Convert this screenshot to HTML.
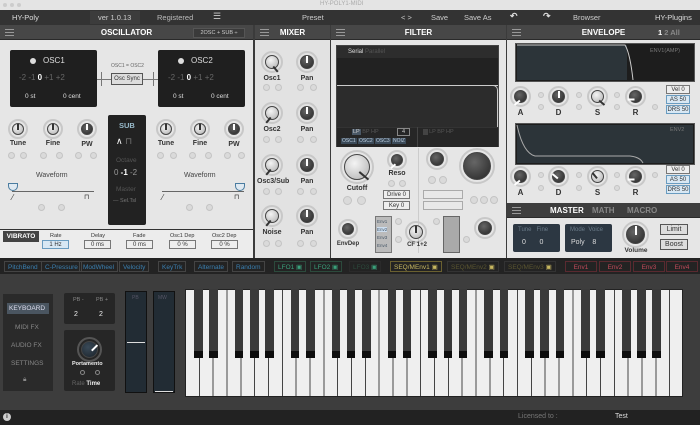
<!DOCTYPE html>
<html><head><meta charset="utf-8"><style>
*{box-sizing:border-box;margin:0;padding:0}
body{width:700px;height:425px;overflow:hidden;background:#3b3b3b;font-family:"Liberation Sans",sans-serif;position:relative}
div{position:absolute}
.t{font-size:7px;white-space:nowrap}
.hd{background:#474747;height:15px;top:25px;color:#fff;font-weight:bold;font-size:8px;text-align:center;line-height:15px;border-bottom:1px solid #2a2a2a}
.hm{position:absolute;left:5px;top:4px;width:9px;height:7px;border-top:1px solid #999;border-bottom:1px solid #999}
.hm:after{content:"";position:absolute;left:0;top:2px;width:9px;border-top:1px solid #999}
.pn{background:#e6e6e6;top:40px;height:218px}
.k{border-radius:50%;border:2px solid #c8c8c8;}
.k i{position:absolute;border-radius:50%;left:2px;top:2px;right:2px;bottom:2px;background:radial-gradient(circle at 40% 35%,#f4f4f4,#b0b0b0);border:1px solid #444}
.k.d i{background:radial-gradient(circle at 40% 35%,#666,#262626)}
.k b{position:absolute;left:50%;top:3px;width:2px;margin-left:-1px;height:40%;background:#333;transform-origin:50% 125%}
.k.d b{background:#fff}
.c{width:7px;height:7px;border-radius:50%;border:1px solid #c4c4c4;background:#dadada}
.lb{font-size:7px;color:#333;text-align:center;font-weight:bold}
.dk{background:#1f1f1f;border-radius:2px}
.bx{border:1px solid #777;background:#eee;font-size:6px;text-align:center;color:#333}
.m{font-size:6.5px;top:261px;height:11px;line-height:11px;padding:0 3px;border:1px solid #444}
</style></head><body>
<div style="left:0;top:0;width:700px;height:10px;background:#e4e4e4"></div>
<div class="t" style="left:320px;top:1px;font-size:6px;color:#aaa">HY-POLY1-MIDI</div>
<div style="left:3px;top:3px;width:4px;height:4px;border-radius:50%;background:#ccc"></div>
<div style="left:10px;top:3px;width:4px;height:4px;border-radius:50%;background:#ccc"></div>
<div style="left:17px;top:3px;width:4px;height:4px;border-radius:50%;background:#ccc"></div>
<div style="left:0;top:10px;width:700px;height:15px;background:#333"></div>
<div class="t" style="left:12px;top:13px;color:#ddd;font-size:7.5px">HY-Poly</div>
<div style="left:90px;top:11px;width:50px;height:13px;background:#3c3c3c"></div>
<div class="t" style="left:98px;top:13px;color:#ccc;font-size:7.5px">ver 1.0.13</div>
<div class="t" style="left:157px;top:13px;color:#bbb;font-size:7.5px">Registered</div>
<div class="t" style="left:213px;top:11px;color:#ccc;font-size:9px">☰</div>
<div class="t" style="left:302px;top:13px;color:#ccc;font-size:7.5px">Preset</div>
<div class="t" style="left:401px;top:13px;color:#ccc;font-size:7.5px">&lt; &gt;</div>
<div class="t" style="left:431px;top:13px;color:#ccc;font-size:7.5px">Save</div>
<div class="t" style="left:464px;top:13px;color:#ccc;font-size:7.5px">Save As</div>
<div class="t" style="left:510px;top:11px;color:#ddd;font-size:9px;font-weight:bold">↶</div>
<div class="t" style="left:543px;top:11px;color:#ddd;font-size:9px;font-weight:bold">↷</div>
<div class="t" style="left:573px;top:13px;color:#ccc;font-size:7.5px">Browser</div>
<div class="t" style="left:655px;top:13px;color:#ddd;font-size:7.5px">HY-Plugins</div>

<div class="hd" style="left:0;width:253px"><span class="hm"></span>OSCILLATOR</div>
<div style="left:193px;top:28px;width:52px;height:10px;background:#3a3a3a;border:1px solid #555;color:#ccc;font-size:5.5px;line-height:8px;text-align:center">2OSC + SUB ÷</div>
<div class="hd" style="left:255px;width:75px"><span class="hm"></span>MIXER</div>
<div class="hd" style="left:331px;width:175px"><span class="hm"></span>FILTER</div>
<div class="hd" style="left:507px;width:193px"><span class="hm"></span>ENVELOPE</div>
<div class="t" style="left:658px;top:28px;color:#fff;font-weight:bold;font-size:7.5px">1 <span style="color:#888">2 All</span></div>

<div class="pn" style="left:0;width:253px"></div>
<div class="pn" style="left:255px;width:75px;background:#e2e2e2"></div>
<div class="pn" style="left:331px;width:175px"></div>
<div class="pn" style="left:507px;width:193px;height:163px"></div>

<div class="dk" style="left:10px;top:50px;width:87px;height:57px"></div>
<div style="left:30px;top:58px;width:6px;height:6px;border-radius:50%;background:#ddd"></div>
<div class="t" style="left:43px;top:56px;color:#ddd;font-size:8px">OSC1</div>
<div class="t" style="left:19px;top:73px;color:#666;font-size:8px">-2 -1 <b style="color:#fff">0</b> +1 +2</div>
<div class="t" style="left:25px;top:93px;color:#ddd;font-size:6.5px">0 st</div>
<div class="t" style="left:63px;top:93px;color:#ddd;font-size:6.5px">0 cent</div>
<div class="dk" style="left:158px;top:50px;width:87px;height:57px"></div>
<div style="left:178px;top:58px;width:6px;height:6px;border-radius:50%;background:#ddd"></div>
<div class="t" style="left:191px;top:56px;color:#ddd;font-size:8px">OSC2</div>
<div class="t" style="left:168px;top:73px;color:#666;font-size:8px">-2 -1 <b style="color:#fff">0</b> +1 +2</div>
<div class="t" style="left:173px;top:93px;color:#ddd;font-size:6.5px">0 st</div>
<div class="t" style="left:211px;top:93px;color:#ddd;font-size:6.5px">0 cent</div>
<div class="t" style="left:111px;top:63px;color:#666;font-size:5px">OSC1 = OSC2</div>
<div style="left:97px;top:79px;width:61px;border-top:1px solid #777"></div>
<div style="left:101px;top:72px;height:14px;border-left:1px solid #777"></div>
<div style="left:153px;top:72px;height:14px;border-left:1px solid #777"></div>
<div class="bx" style="left:111px;top:73px;width:32px;height:12px;line-height:10px;background:#ddd;border:1px solid #555">Osc Sync</div>

<div class="k" style="left:8px;top:119px;width:20px;height:20px"><i></i><b></b></div>
<div class="k" style="left:43px;top:119px;width:20px;height:20px"><i></i><b></b></div>
<div class="k d" style="left:77px;top:119px;width:20px;height:20px"><i></i><b></b></div>
<div class="k" style="left:156px;top:119px;width:20px;height:20px"><i></i><b></b></div>
<div class="k" style="left:190px;top:119px;width:20px;height:20px"><i></i><b></b></div>
<div class="k d" style="left:224px;top:119px;width:20px;height:20px"><i></i><b></b></div>
<div class="lb" style="left:8px;top:140px;width:20px">Tune</div>
<div class="lb" style="left:43px;top:140px;width:20px">Fine</div>
<div class="lb" style="left:77px;top:141px;width:20px">PW</div>
<div class="lb" style="left:156px;top:140px;width:20px">Tune</div>
<div class="lb" style="left:190px;top:140px;width:20px">Fine</div>
<div class="lb" style="left:224px;top:141px;width:20px">PW</div>
<div class="c" style="left:8px;top:152px"></div><div class="c" style="left:20px;top:152px"></div>
<div class="c" style="left:40px;top:152px"></div><div class="c" style="left:56px;top:152px"></div>
<div class="c" style="left:75px;top:152px"></div><div class="c" style="left:90px;top:152px"></div>
<div class="c" style="left:157px;top:152px"></div><div class="c" style="left:170px;top:152px"></div>
<div class="c" style="left:189px;top:152px"></div><div class="c" style="left:205px;top:152px"></div>
<div class="c" style="left:224px;top:152px"></div><div class="c" style="left:238px;top:152px"></div>
<div class="t" style="left:36px;top:172px;color:#444">Waveform</div>
<div class="t" style="left:184px;top:172px;color:#444">Waveform</div>
<div style="left:12px;top:191px;width:82px;border-top:1px solid #666"></div>
<div style="left:162px;top:191px;width:82px;border-top:1px solid #666"></div>
<div style="left:8px;top:183px;width:10px;height:8px;border:1px solid #4a7ca0;border-radius:0 0 5px 5px;background:#dfe9f1"></div>
<div style="left:235px;top:183px;width:10px;height:8px;border:1px solid #4a7ca0;border-radius:0 0 5px 5px;background:#dfe9f1"></div>
<div class="t" style="left:12px;top:193px;color:#333;font-size:8px">⁄</div>
<div class="t" style="left:84px;top:193px;color:#333;font-size:7px">⊓</div>
<div class="t" style="left:162px;top:193px;color:#333;font-size:8px">⁄</div>
<div class="t" style="left:234px;top:193px;color:#333;font-size:7px">⊓</div>
<div class="c" style="left:38px;top:204px"></div><div class="c" style="left:58px;top:204px"></div>
<div class="c" style="left:186px;top:204px"></div><div class="c" style="left:206px;top:204px"></div>

<div class="dk" style="left:108px;top:115px;width:38px;height:110px;background:#222"></div>
<div class="t" style="left:119px;top:121px;color:#9bc;font-weight:bold;font-size:7.5px">SUB</div>
<div class="t" style="left:116px;top:136px;color:#fff;font-size:9px">∧ <span style="color:#777">⊓</span></div>
<div class="t" style="left:116px;top:157px;color:#555;font-size:6.5px">Octave</div>
<div class="t" style="left:114px;top:168px;color:#999;font-size:8px">0 <b style="color:#fff">-1</b> -2</div>
<div class="t" style="left:116px;top:186px;color:#555;font-size:6.5px">Master</div>
<div class="t" style="left:113px;top:198px;color:#777;font-size:5.5px">— Sel.Tsl</div>

<div style="left:0;top:229px;width:253px;height:29px;background:#ececec;border-top:1px solid #333"></div>
<div style="left:3px;top:231px;width:36px;height:11px;background:#444;color:#fff;font-size:6.5px;font-weight:bold;line-height:11px;text-align:center">VIBRATO</div>
<div class="t" style="left:50px;top:233px;color:#333;font-size:5.5px">Rate</div>
<div class="bx" style="left:42px;top:240px;width:27px;height:9px;background:#d8e8f4;border-color:#6a9cc0;line-height:8px">1 Hz</div>
<div class="t" style="left:91px;top:233px;color:#333;font-size:5.5px">Delay</div>
<div class="bx" style="left:84px;top:240px;width:27px;height:9px;line-height:8px">0 ms</div>
<div class="t" style="left:133px;top:233px;color:#333;font-size:5.5px">Fade</div>
<div class="bx" style="left:126px;top:240px;width:27px;height:9px;line-height:8px">0 ms</div>
<div class="t" style="left:170px;top:233px;color:#333;font-size:5.5px">Osc1 Dep</div>
<div class="bx" style="left:169px;top:240px;width:27px;height:9px;line-height:8px">0 %</div>
<div class="t" style="left:212px;top:233px;color:#333;font-size:5.5px">Osc2 Dep</div>
<div class="bx" style="left:211px;top:240px;width:27px;height:9px;line-height:8px">0 %</div>

<div class="k" style="left:261px;top:51px;width:22px;height:22px"><i></i><b style="transform:rotate(140deg)"></b></div>
<div class="k d" style="left:296px;top:51px;width:22px;height:22px"><i></i><b></b></div>
<div class="lb" style="left:261px;top:75px;width:22px">Osc1</div><div class="lb" style="left:296px;top:75px;width:22px">Pan</div>
<div class="k" style="left:261px;top:102px;width:22px;height:22px"><i></i><b style="transform:rotate(-140deg)"></b></div>
<div class="k d" style="left:296px;top:102px;width:22px;height:22px"><i></i><b></b></div>
<div class="lb" style="left:261px;top:126px;width:22px">Osc2</div><div class="lb" style="left:296px;top:126px;width:22px">Pan</div>
<div class="k" style="left:261px;top:154px;width:22px;height:22px"><i></i><b style="transform:rotate(-140deg)"></b></div>
<div class="k d" style="left:296px;top:154px;width:22px;height:22px"><i></i><b></b></div>
<div class="lb" style="left:257px;top:178px;width:30px">Osc3/Sub</div><div class="lb" style="left:296px;top:178px;width:22px">Pan</div>
<div class="k" style="left:261px;top:205px;width:22px;height:22px"><i></i><b style="transform:rotate(-140deg)"></b></div>
<div class="k d" style="left:296px;top:205px;width:22px;height:22px"><i></i><b></b></div>
<div class="lb" style="left:261px;top:229px;width:22px">Noise</div><div class="lb" style="left:296px;top:229px;width:22px">Pan</div>
<div class="c" style="left:263px;top:84px"></div><div class="c" style="left:275px;top:84px"></div><div class="c" style="left:297px;top:84px"></div><div class="c" style="left:310px;top:84px"></div>
<div class="c" style="left:263px;top:136px"></div><div class="c" style="left:275px;top:136px"></div><div class="c" style="left:297px;top:136px"></div><div class="c" style="left:310px;top:136px"></div>
<div class="c" style="left:263px;top:188px"></div><div class="c" style="left:275px;top:188px"></div><div class="c" style="left:297px;top:188px"></div><div class="c" style="left:310px;top:188px"></div>
<div class="c" style="left:263px;top:240px"></div><div class="c" style="left:275px;top:240px"></div><div class="c" style="left:297px;top:240px"></div><div class="c" style="left:310px;top:240px"></div>

<div style="left:336px;top:45px;width:163px;height:102px;background:#222;border:1px solid #444"></div>
<div style="left:337px;top:46px;width:161px;height:12px;background:#2d2d2d"></div>
<div class="t" style="left:348px;top:49px;color:#ddd;font-size:6px">Serial <span style="color:#555">Parallel</span></div>
<div style="left:337px;top:85px;width:161px;height:42px;background:#2c2c2c;border-top:1px solid #ccc"></div>
<div style="left:488px;top:85px;width:10px;height:42px;border-top:1px solid #ccc;border-right:1px solid #ccc;border-radius:0 5px 0 0"></div>
<div style="left:337px;top:127px;width:161px;height:20px;background:#262626;border-top:1px solid #333"></div>
<div style="left:417px;top:127px;height:20px;border-left:1px solid #444"></div>
<div class="t" style="left:352px;top:129px;color:#ccc;font-size:5.5px"><span style="background:#4a5866;padding:0 1px">LP</span> <span style="color:#555">BP HP</span></div>
<div style="left:397px;top:128px;width:13px;height:8px;border:1px solid #888;color:#ccc;font-size:5.5px;text-align:center;line-height:6px">4</div>
<div class="t" style="left:423px;top:129px;color:#555;font-size:5.5px"><span style="background:#444">&nbsp;&nbsp;&nbsp;</span> LP BP HP</div>
<div class="t" style="left:341px;top:138px;color:#bcd;font-size:5px"><span style="background:#3b4a58;padding:0 1px">OSC1</span> <span style="background:#3b4a58;padding:0 1px">OSC2</span> <span style="background:#3b4a58;padding:0 1px">OSC3</span> <span style="background:#3b4a58;padding:0 1px">NOIZ</span></div>
<div style="left:418px;top:148px;height:105px;border-left:1px solid #ccc"></div>

<div class="k" style="left:340px;top:150px;width:34px;height:34px"><i></i><b style="transform:rotate(130deg)"></b></div>
<div class="lb" style="left:342px;top:185px;width:30px">Cutoff</div>
<div class="k d" style="left:387px;top:150px;width:20px;height:20px"><i></i><b style="transform:rotate(-130deg)"></b></div>
<div class="lb" style="left:387px;top:170px;width:20px">Reso</div>
<div class="c" style="left:388px;top:180px"></div><div class="c" style="left:399px;top:180px"></div>
<div class="c" style="left:343px;top:196px;width:9px;height:9px"></div><div class="c" style="left:357px;top:196px;width:9px;height:9px"></div>
<div class="bx" style="left:383px;top:190px;width:27px;height:9px;line-height:8px">Drive 0</div>
<div class="bx" style="left:383px;top:201px;width:27px;height:9px;line-height:8px">Key 0</div>
<div class="k d" style="left:426px;top:148px;width:22px;height:22px"><i></i></div>
<div class="c" style="left:428px;top:176px;width:8px;height:8px"></div><div class="c" style="left:439px;top:176px;width:8px;height:8px"></div>
<div class="k d" style="left:459px;top:148px;width:36px;height:36px"><i></i></div>
<div class="bx" style="left:423px;top:190px;width:40px;height:9px;background:#e8e8e8;border-color:#aaa"></div>
<div class="bx" style="left:423px;top:201px;width:40px;height:9px;background:#e8e8e8;border-color:#aaa"></div>
<div class="c" style="left:470px;top:196px;width:8px;height:8px"></div><div class="c" style="left:480px;top:196px;width:8px;height:8px"></div><div class="c" style="left:490px;top:196px;width:8px;height:8px"></div>
<div class="k d" style="left:338px;top:219px;width:20px;height:20px"><i></i></div>
<div class="lb" style="left:335px;top:241px;width:26px;font-size:6px">EnvDep</div>
<div style="left:375px;top:216px;width:17px;height:37px;background:#bbb;border:1px solid #777"></div>
<div class="t" style="left:377px;top:218px;color:#456;font-size:4.5px;line-height:8px">Env1<br><span style="background:#cde">Env2</span><br>Env3<br>Env4</div>
<div class="c" style="left:395px;top:218px"></div><div class="c" style="left:395px;top:236px"></div>
<div class="k" style="left:405px;top:221px;width:22px;height:22px"><i></i><b></b></div>
<div class="lb" style="left:402px;top:242px;width:30px;font-size:6px">CF 1+2</div>
<div class="c" style="left:433px;top:218px"></div>
<div style="left:443px;top:216px;width:17px;height:37px;background:#aaa;border:1px solid #666"></div>
<div class="c" style="left:463px;top:236px"></div>
<div class="k d" style="left:474px;top:217px;width:22px;height:22px"><i></i></div>

<div style="left:515px;top:43px;width:180px;height:39px;background:#1d1d1d;border:1px solid #555"></div>
<div style="left:517px;top:45px;width:110px;height:35px;background:#2c3439"></div>
<svg style="position:absolute;left:515px;top:43px" width="180" height="39"><path d="M2 2 L110 2 Q115 10 118 37" stroke="#ccc" fill="none" stroke-width="1"/></svg>
<div class="t" style="left:650px;top:48px;color:#777;font-size:5.5px">ENV1(AMP)</div>
<div style="left:515px;top:123px;width:180px;height:42px;background:#1d1d1d;border:1px solid #555"></div>
<div style="left:517px;top:125px;width:176px;height:38px;background:#2c3439"></div>
<svg style="position:absolute;left:515px;top:123px" width="180" height="42"><path d="M2 2 Q8 30 20 33 L115 33 Q125 34 128 40" stroke="#aaa" fill="none" stroke-width="1"/></svg>
<div class="t" style="left:670px;top:127px;color:#777;font-size:5.5px">ENV2</div>
<div class="k d" style="left:510px;top:86px;width:21px;height:21px"><i></i><b style="transform:rotate(-130deg)"></b></div>
<div class="k d" style="left:548px;top:86px;width:21px;height:21px"><i></i><b></b></div>
<div class="k" style="left:587px;top:86px;width:21px;height:21px"><i></i><b style="transform:rotate(130deg)"></b></div>
<div class="k d" style="left:625px;top:86px;width:21px;height:21px"><i></i><b style="transform:rotate(-90deg)"></b></div>
<div class="lb" style="left:510px;top:108px;width:21px;font-size:8px">A</div>
<div class="lb" style="left:548px;top:108px;width:21px;font-size:8px">D</div>
<div class="lb" style="left:587px;top:108px;width:21px;font-size:8px">S</div>
<div class="lb" style="left:625px;top:108px;width:21px;font-size:8px">R</div>
<div class="k d" style="left:510px;top:166px;width:21px;height:21px"><i></i><b style="transform:rotate(-130deg)"></b></div>
<div class="k d" style="left:548px;top:166px;width:21px;height:21px"><i></i><b style="transform:rotate(-50deg)"></b></div>
<div class="k" style="left:587px;top:166px;width:21px;height:21px"><i></i><b style="transform:rotate(-40deg)"></b></div>
<div class="k d" style="left:625px;top:166px;width:21px;height:21px"><i></i><b style="transform:rotate(-90deg)"></b></div>
<div class="lb" style="left:510px;top:188px;width:21px;font-size:8px">A</div>
<div class="lb" style="left:548px;top:188px;width:21px;font-size:8px">D</div>
<div class="lb" style="left:587px;top:188px;width:21px;font-size:8px">S</div>
<div class="lb" style="left:625px;top:188px;width:21px;font-size:8px">R</div>
<div class="c" style="left:538px;top:92px;width:6px;height:6px"></div><div class="c" style="left:538px;top:104px;width:6px;height:6px"></div>
<div class="c" style="left:576px;top:92px;width:6px;height:6px"></div><div class="c" style="left:576px;top:104px;width:6px;height:6px"></div>
<div class="c" style="left:614px;top:92px;width:6px;height:6px"></div><div class="c" style="left:614px;top:104px;width:6px;height:6px"></div>
<div class="c" style="left:652px;top:104px;width:6px;height:6px"></div>
<div class="c" style="left:538px;top:172px;width:6px;height:6px"></div><div class="c" style="left:538px;top:185px;width:6px;height:6px"></div>
<div class="c" style="left:576px;top:172px;width:6px;height:6px"></div><div class="c" style="left:576px;top:185px;width:6px;height:6px"></div>
<div class="c" style="left:614px;top:172px;width:6px;height:6px"></div><div class="c" style="left:614px;top:185px;width:6px;height:6px"></div>
<div class="c" style="left:652px;top:172px;width:6px;height:6px"></div>
<div class="bx" style="left:666px;top:85px;width:24px;height:9px;line-height:8px">Vel 0</div>
<div class="bx" style="left:666px;top:95px;width:24px;height:9px;line-height:8px;background:#d8e8f4;border-color:#6a9cc0">AS 50</div>
<div class="bx" style="left:666px;top:105px;width:24px;height:9px;line-height:8px;background:#d8e8f4;border-color:#6a9cc0">DRS 50</div>
<div class="bx" style="left:666px;top:165px;width:24px;height:9px;line-height:8px">Vel 0</div>
<div class="bx" style="left:666px;top:175px;width:24px;height:9px;line-height:8px;background:#d8e8f4;border-color:#6a9cc0">AS 50</div>
<div class="bx" style="left:666px;top:185px;width:24px;height:9px;line-height:8px;background:#d8e8f4;border-color:#6a9cc0">DRS 50</div>

<div class="hd" style="left:507px;top:203px;width:193px;height:15px;background:#3e3e3e;text-align:left"><span class="hm"></span><span style="position:absolute;left:43px">MASTER</span><span style="position:absolute;left:85px;color:#888">MATH</span><span style="position:absolute;left:120px;color:#888">MACRO</span></div>
<div style="left:507px;top:218px;width:193px;height:40px;background:#e6e6e6"></div>
<div style="left:513px;top:224px;width:47px;height:28px;background:#2c3742;border-radius:2px"></div>
<div class="t" style="left:518px;top:227px;color:#6a7a88;font-size:6px">Tune &nbsp;&nbsp;Fine</div>
<div class="t" style="left:522px;top:239px;color:#ddd;font-size:7px">0 &nbsp;&nbsp;&nbsp;&nbsp;&nbsp;&nbsp;0</div>
<div style="left:565px;top:224px;width:47px;height:28px;background:#2c3742;border-radius:2px"></div>
<div class="t" style="left:570px;top:227px;color:#6a7a88;font-size:6px">Mode &nbsp;Voice</div>
<div class="t" style="left:571px;top:239px;color:#ddd;font-size:7px">Poly &nbsp;&nbsp;&nbsp;8</div>
<div class="k d" style="left:622px;top:221px;width:27px;height:27px"><i></i><b></b></div>
<div class="lb" style="left:620px;top:247px;width:32px;font-size:6.5px">Volume</div>
<div class="bx" style="left:660px;top:224px;width:28px;height:11px;line-height:9px;font-size:7px;background:#ddd;border:1px solid #555">Limit</div>
<div class="bx" style="left:660px;top:239px;width:28px;height:11px;line-height:9px;font-size:7px;background:#ddd;border:1px solid #555">Boost</div>

<div style="left:0;top:258px;width:700px;height:16px;background:#232323"></div>
<div class="m" style="left:4px;color:#3a7fb0">PitchBend</div>
<div class="m" style="left:41px;color:#3a7fb0">C-Pressure</div>
<div class="m" style="left:79px;color:#3a7fb0">ModWheel</div>
<div class="m" style="left:119px;color:#3a7fb0">Velocity</div>
<div class="m" style="left:158px;color:#3a7fb0">KeyTrk</div>
<div class="m" style="left:194px;color:#3a7fb0">Alternate</div>
<div class="m" style="left:232px;color:#3a7fb0">Random</div>
<div class="m" style="left:274px;color:#3aa07a;border-color:#2c4a3c">LFO1 ▣</div>
<div class="m" style="left:310px;color:#3aa07a;border-color:#2c4a3c">LFO2 ▣</div>
<div class="m" style="left:349px;color:#2c4a3c;border-color:#2a2a2a">LFO3 <span style="color:#3aa07a">▣</span></div>
<div class="m" style="left:390px;color:#c8b860;border-color:#6a6030">SEQ/MEnv1 ▣</div>
<div class="m" style="left:447px;color:#5a5530;border-color:#333">SEQ/MEnv2 <span style="color:#c8b860">▣</span></div>
<div class="m" style="left:504px;color:#5a5530;border-color:#333">SEQ/MEnv3 <span style="color:#c8b860">▣</span></div>
<div class="m" style="left:565px;color:#c04a5a;border-color:#5a2a30;width:32px;text-align:center">Env1</div>
<div class="m" style="left:599px;color:#c04a5a;border-color:#5a2a30;width:32px;text-align:center">Env2</div>
<div class="m" style="left:633px;color:#c04a5a;border-color:#5a2a30;width:32px;text-align:center">Env3</div>
<div class="m" style="left:666px;color:#c04a5a;border-color:#5a2a30;width:32px;text-align:center">Env4</div>

<div style="left:0;top:274px;width:700px;height:136px;background:#3d3d3d"></div>
<div style="left:3px;top:294px;width:50px;height:97px;background:#2a2a2a"></div>
<div style="left:7px;top:303px;width:42px;height:11px;background:#4a5560"></div>
<div class="t" style="left:9px;top:305px;color:#dde;font-size:6.5px">KEYBOARD</div>
<div class="t" style="left:15px;top:324px;color:#888;font-size:6.5px">MIDI FX</div>
<div class="t" style="left:11px;top:342px;color:#888;font-size:6.5px">AUDIO FX</div>
<div class="t" style="left:11px;top:360px;color:#888;font-size:6.5px">SETTINGS</div>
<div class="t" style="left:23px;top:376px;color:#888;font-size:6.5px">🔒︎</div>
<div style="left:64px;top:293px;width:51px;height:31px;background:#262626;border-radius:2px"></div>
<div class="t" style="left:73px;top:297px;color:#888;font-size:5.5px">PB -</div>
<div class="t" style="left:96px;top:297px;color:#888;font-size:5.5px">PB +</div>
<div class="t" style="left:74px;top:311px;color:#eee;font-size:7px">2</div>
<div class="t" style="left:99px;top:311px;color:#eee;font-size:7px">2</div>
<div style="left:64px;top:330px;width:51px;height:61px;background:#262626;border-radius:2px"></div>
<div class="k d" style="left:77px;top:337px;width:25px;height:25px;border-color:#555"><i style="background:radial-gradient(circle at 40% 35%,#3a4a58,#1a222a)"></i><b style="transform:rotate(45deg)"></b></div>
<div class="t" style="left:72px;top:361px;color:#eee;font-size:5.5px;font-weight:bold">Portamento</div>
<div style="left:80px;top:370px;width:5px;height:5px;border:1px solid #888;border-radius:50%"></div>
<div style="left:95px;top:370px;width:5px;height:5px;border:1px solid #888;border-radius:50%"></div>
<div class="t" style="left:72px;top:381px;color:#666;font-size:6px">Rate <b style="color:#eee">Time</b></div>
<div style="left:125px;top:291px;width:22px;height:102px;background:#222c34;border:1px solid #111"></div>
<div class="t" style="left:132px;top:295px;color:#556;font-size:5px">PB</div>
<div style="left:127px;top:342px;width:18px;border-top:1px solid #ddd"></div>
<div style="left:153px;top:291px;width:22px;height:102px;background:#222c34;border:1px solid #111"></div>
<div class="t" style="left:158px;top:295px;color:#556;font-size:5px">MW</div>
<div style="left:155px;top:391px;width:18px;border-top:1px solid #ddd"></div>

<div style="left:185px;top:289px;width:498px;height:108px;background:repeating-linear-gradient(90deg,#efefef 0,#efefef 12.83px,#444 12.83px,#444 13.833px);border:1px solid #222"></div>
<div id="bk" style="left:185px;top:289px;width:498px;height:69px">
<div style="left:9px"></div><div style="left:24.2px"></div><div style="left:49.8px"></div><div style="left:65px"></div><div style="left:80.2px"></div>
<div style="left:105.8px"></div><div style="left:121px"></div><div style="left:146.6px"></div><div style="left:161.8px"></div><div style="left:177px"></div>
<div style="left:202.6px"></div><div style="left:217.8px"></div><div style="left:243.4px"></div><div style="left:258.6px"></div><div style="left:273.8px"></div>
<div style="left:299.4px"></div><div style="left:314.6px"></div><div style="left:340.2px"></div><div style="left:355.4px"></div><div style="left:370.6px"></div>
<div style="left:396.2px"></div><div style="left:411.4px"></div><div style="left:437px"></div><div style="left:452.2px"></div><div style="left:467.4px"></div>
</div>
<style>#bk div{top:0;width:8.5px;height:69px;background:linear-gradient(#3a3a3a 0,#3a3a3a 90%,#0d0d0d 90%)}</style>

<div style="left:0;top:410px;width:700px;height:15px;background:#222"></div>
<div style="left:3px;top:413px;width:8px;height:8px;border-radius:50%;background:#ccc;color:#222;font-size:6px;text-align:center;line-height:8px;font-weight:bold">i</div>
<div class="t" style="left:518px;top:413px;color:#777;font-size:7px">Licensed to :</div>
<div class="t" style="left:615px;top:413px;color:#ddd;font-size:7px">Test</div>
</body></html>
